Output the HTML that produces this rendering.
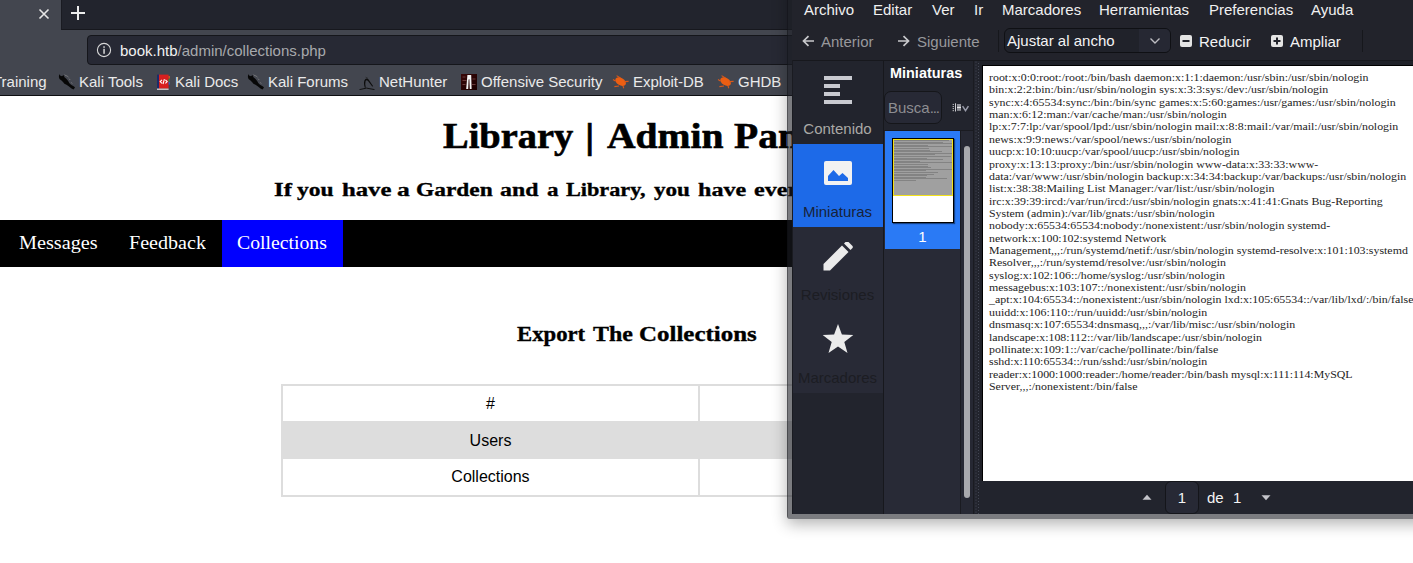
<!DOCTYPE html>
<html><head><meta charset="utf-8">
<style>
*{margin:0;padding:0;box-sizing:border-box}
html,body{width:1413px;height:563px;overflow:hidden;background:#fff;position:relative}
body{font-family:"Liberation Sans",sans-serif}
.a{position:absolute;white-space:pre}
.ui{font-family:"Liberation Sans",sans-serif;font-size:15px;line-height:18px}
.srf{font-family:"Liberation Serif",serif;font-weight:bold;color:#000}
</style></head><body>

<!-- ===== BROWSER CHROME ===== -->
<div class="a" style="left:0;top:0;width:800px;height:96px;background:#43464f"></div>
<!-- tab bar dark area -->
<div class="a" style="left:61px;top:0;width:740px;height:30px;background:#22242d;border-left:1px solid #1a1b22;border-bottom:1px solid #17181e"></div>
<!-- close x -->
<svg class="a" style="left:38px;top:8px" width="12" height="12" viewBox="0 0 12 12"><path d="M1.5 1.5L10.5 10.5M10.5 1.5L1.5 10.5" stroke="#e6e6e6" stroke-width="1.6"/></svg>
<!-- plus -->
<svg class="a" style="left:70px;top:5px" width="16" height="16" viewBox="0 0 16 16"><path d="M8 1V15M1 8H15" stroke="#ececec" stroke-width="2"/></svg>
<!-- address field -->
<div class="a" style="left:87px;top:35px;width:720px;height:30px;background:#272934;border:1px solid #15161b;border-radius:4px"></div>
<svg class="a" style="left:96px;top:42px" width="16" height="16" viewBox="0 0 16 16"><circle cx="8" cy="8" r="6.6" fill="none" stroke="#d8d8d8" stroke-width="1.1"/><rect x="7.3" y="6.8" width="1.5" height="5" fill="#d8d8d8"/><rect x="7.3" y="4.3" width="1.5" height="1.5" fill="#d8d8d8"/></svg>
<div class="a ui" style="left:120px;top:42px;color:#f2f2f2">book.htb<span style="color:#a8a9ad">/admin/collections.php</span></div>

<!-- bookmarks -->
<div class="a ui" style="left:-7px;top:73px;color:#eaeaea">Training</div>
<div class="a ui" style="left:79px;top:73px;color:#eaeaea">Kali Tools</div>
<div class="a ui" style="left:175px;top:73px;color:#eaeaea">Kali Docs</div>
<div class="a ui" style="left:268px;top:73px;color:#eaeaea">Kali Forums</div>
<div class="a ui" style="left:379px;top:73px;color:#eaeaea">NetHunter</div>
<div class="a ui" style="left:481px;top:73px;color:#eaeaea">Offensive Security</div>
<div class="a ui" style="left:633px;top:73px;color:#eaeaea">Exploit-DB</div>
<div class="a ui" style="left:738px;top:73px;color:#eaeaea">GHDB</div>
<!-- bookmark icons -->
<svg class="a" style="left:58px;top:74px" width="18" height="16" viewBox="0 0 18 16"><path d="M1.1 0L2 1.5L4 2.3L5.5 1L6.5 3.2L8 4.6L9.6 6.2L10.6 7.8L11.2 9L13 10.8L16 12.5L17 13.5L15.5 15.4L13.5 14.5L11 12.5L8.5 10.8L6.4 9.8L5 8L3.5 6.5L1.5 5L0.9 3Z" fill="#070707"/><path d="M6.6 0.6L8.4 2.2M8.4 1.2L10.6 3.4M11 4.6L12.2 6M13.4 8.4L14.2 9.6" fill="none" stroke="#8a8a8a" stroke-width="0.7"/></svg>
<svg class="a" style="left:157px;top:74px" width="14" height="16" viewBox="0 0 14 16"><rect x="0" y="0.6" width="2" height="14" fill="#1c2a6a"/><rect x="2" y="0.6" width="9.6" height="14" fill="#d81f1f"/><rect x="0" y="14.6" width="11.6" height="1.2" fill="#e8dede"/><rect x="11.6" y="2" width="1.2" height="2.6" fill="#e0601a"/><rect x="11.6" y="5" width="1.2" height="2.6" fill="#2c9a3a"/><rect x="11.6" y="8" width="1.2" height="2.6" fill="#3a5ad0"/><path d="M5 5.8L3.2 7.6L5 9.4M8.4 5.8L10.2 7.6L8.4 9.4M7.4 5.2L6 10" fill="none" stroke="#fff" stroke-width="1.1"/></svg>
<svg class="a" style="left:247px;top:74px" width="18" height="16" viewBox="0 0 18 16"><path d="M1.1 0L2 1.5L4 2.3L5.5 1L6.5 3.2L8 4.6L9.6 6.2L10.6 7.8L11.2 9L13 10.8L16 12.5L17 13.5L15.5 15.4L13.5 14.5L11 12.5L8.5 10.8L6.4 9.8L5 8L3.5 6.5L1.5 5L0.9 3Z" fill="#070707"/><path d="M6.6 0.6L8.4 2.2M8.4 1.2L10.6 3.4M11 4.6L12.2 6M13.4 8.4L14.2 9.6" fill="none" stroke="#8a8a8a" stroke-width="0.7"/></svg>
<svg class="a" style="left:359px;top:74px" width="16" height="16" viewBox="0 0 16 16"><path d="M5.8 13.8C4.6 10 4.6 6.6 6.4 5Q8 3.8 9.6 5.6L14.2 12.2L13.2 12.6L9.2 7.2Q7.6 5.6 6.6 7Q5.8 9.6 6.8 13.8Z" fill="#0d0d0d"/><path d="M6.6 3.2L9 4.4" stroke="#222" stroke-width="0.7"/><path d="M0.5 15.6Q7 12.6 15.5 15.6" fill="none" stroke="#111" stroke-width="1"/></svg>
<svg class="a" style="left:461px;top:74px" width="16" height="16" viewBox="0 0 16 16"><defs><linearGradient id="og" x1="0" y1="0" x2="1" y2="1"><stop offset="0" stop-color="#3a0808"/><stop offset="1" stop-color="#1a0000"/></linearGradient></defs><rect width="16" height="16" fill="url(#og)"/><g fill="#6a3a3a"><rect x="1.5" y="2.5" width="3" height="1"/><rect x="1.5" y="6" width="4" height="1"/><rect x="1.5" y="10" width="3" height="1"/><rect x="11.5" y="4.5" width="3" height="1"/><rect x="11" y="10" width="3.5" height="1"/></g><path d="M6.4 1H10.2L10.6 15H8.8L8.4 6Q8.2 4.2 7.6 6L7.2 15H5.2Z" fill="#f4f4f4"/></svg>
<svg class="a" style="left:612px;top:75px" width="17" height="14" viewBox="0 0 17 14"><ellipse cx="8.6" cy="6.6" rx="5.8" ry="3.7" transform="rotate(30 8.6 6.6)" fill="#ec5e12"/><path d="M4.6 0.6L8.4 3M1 4.6L3.4 6M12.2 6.6L16.6 6.4M2.4 11.6L7 11M11 11L11.8 13.2" stroke="#d9581a" stroke-width="1.1"/></svg>
<svg class="a" style="left:717px;top:75px" width="17" height="14" viewBox="0 0 17 14"><ellipse cx="8.6" cy="6.6" rx="5.8" ry="3.7" transform="rotate(30 8.6 6.6)" fill="#ec5e12"/><path d="M4.6 0.6L8.4 3M1 4.6L3.4 6M12.2 6.6L16.6 6.4M2.4 11.6L7 11M11 11L11.8 13.2" stroke="#d9581a" stroke-width="1.1"/></svg>
<div class="a" style="left:0;top:95px;width:800px;height:1px;background:#0d0e11"></div>

<!-- ===== PAGE ===== -->
<div class="a" style="left:0;top:220px;width:800px;height:47px;background:#000"></div>
<div class="a" style="left:222px;top:220px;width:121px;height:47px;background:#0000ff"></div>

<!--SERIF-START-->
<div class="a" style="left:442.50px;top:117.81px;font-family:'Liberation Serif',serif;font-weight:700;font-size:35px;line-height:38.74px;color:#000;transform:scaleX(1.0978);transform-origin:0 0;-webkit-text-stroke:0.6px #000">Library</div>
<div class="a" style="left:584.83px;top:117.81px;font-family:'Liberation Serif',serif;font-weight:700;font-size:35px;line-height:38.74px;color:#000;transform:scaleX(1.2190);transform-origin:0 0;-webkit-text-stroke:0.6px #000">|</div>
<div class="a" style="left:606.50px;top:117.81px;font-family:'Liberation Serif',serif;font-weight:700;font-size:35px;line-height:38.74px;color:#000;transform:scaleX(1.1298);transform-origin:0 0;-webkit-text-stroke:0.6px #000">Admin</div>
<div class="a" style="left:734.48px;top:117.81px;font-family:'Liberation Serif',serif;font-weight:700;font-size:35px;line-height:38.74px;color:#000;transform:scaleX(1.1298);transform-origin:0 0;-webkit-text-stroke:0.6px #000">Panel</div>
<div class="a" style="left:273.85px;top:178.56px;font-family:'Liberation Serif',serif;font-weight:700;font-size:19.8px;line-height:21.92px;color:#000;transform:scaleX(1.2513);transform-origin:0 0;-webkit-text-stroke:0.35px #000">If</div>
<div class="a" style="left:297.48px;top:178.56px;font-family:'Liberation Serif',serif;font-weight:700;font-size:19.8px;line-height:21.92px;color:#000;transform:scaleX(1.1887);transform-origin:0 0;-webkit-text-stroke:0.35px #000">you</div>
<div class="a" style="left:341.60px;top:178.56px;font-family:'Liberation Serif',serif;font-weight:700;font-size:19.8px;line-height:21.92px;color:#000;transform:scaleX(1.2503);transform-origin:0 0;-webkit-text-stroke:0.35px #000">have</div>
<div class="a" style="left:397.43px;top:178.56px;font-family:'Liberation Serif',serif;font-weight:700;font-size:19.8px;line-height:21.92px;color:#000;transform:scaleX(1.2889);transform-origin:0 0;-webkit-text-stroke:0.35px #000">a</div>
<div class="a" style="left:416.14px;top:178.56px;font-family:'Liberation Serif',serif;font-weight:700;font-size:19.8px;line-height:21.92px;color:#000;transform:scaleX(1.1820);transform-origin:0 0;-webkit-text-stroke:0.35px #000">Garden</div>
<div class="a" style="left:500.48px;top:178.56px;font-family:'Liberation Serif',serif;font-weight:700;font-size:19.8px;line-height:21.92px;color:#000;transform:scaleX(1.2053);transform-origin:0 0;-webkit-text-stroke:0.35px #000">and</div>
<div class="a" style="left:547.10px;top:178.56px;font-family:'Liberation Serif',serif;font-weight:700;font-size:19.8px;line-height:21.92px;color:#000;transform:scaleX(1.1667);transform-origin:0 0;-webkit-text-stroke:0.35px #000">a</div>
<div class="a" style="left:565.86px;top:178.56px;font-family:'Liberation Serif',serif;font-weight:700;font-size:19.8px;line-height:21.92px;color:#000;transform:scaleX(1.1230);transform-origin:0 0;-webkit-text-stroke:0.35px #000">Library,</div>
<div class="a" style="left:653.78px;top:178.56px;font-family:'Liberation Serif',serif;font-weight:700;font-size:19.8px;line-height:21.92px;color:#000;transform:scaleX(1.1689);transform-origin:0 0;-webkit-text-stroke:0.35px #000">you</div>
<div class="a" style="left:697.91px;top:178.56px;font-family:'Liberation Serif',serif;font-weight:700;font-size:19.8px;line-height:21.92px;color:#000;transform:scaleX(1.2167);transform-origin:0 0;-webkit-text-stroke:0.35px #000">have</div>
<div class="a" style="left:753.97px;top:178.56px;font-family:'Liberation Serif',serif;font-weight:700;font-size:19.8px;line-height:21.92px;color:#000;transform:scaleX(1.2167);transform-origin:0 0;-webkit-text-stroke:0.35px #000">everything</div>
<div class="a" style="left:18.64px;top:233.86px;font-family:'Liberation Serif',serif;font-weight:400;font-size:18px;line-height:19.93px;color:#fff;transform:scaleX(1.1237);transform-origin:0 0;-webkit-text-stroke:0px #fff">Messages</div>
<div class="a" style="left:129.04px;top:233.86px;font-family:'Liberation Serif',serif;font-weight:400;font-size:18px;line-height:19.93px;color:#fff;transform:scaleX(1.1159);transform-origin:0 0;-webkit-text-stroke:0px #fff">Feedback</div>
<div class="a" style="left:237.43px;top:233.86px;font-family:'Liberation Serif',serif;font-weight:400;font-size:18px;line-height:19.93px;color:#fff;transform:scaleX(1.0956);transform-origin:0 0;-webkit-text-stroke:0px #fff">Collections</div>
<div class="a" style="left:517.28px;top:322.84px;font-family:'Liberation Serif',serif;font-weight:700;font-size:21.5px;line-height:23.80px;color:#000;transform:scaleX(1.0571);transform-origin:0 0;-webkit-text-stroke:0.35px #000">Export</div>
<div class="a" style="left:593.07px;top:322.84px;font-family:'Liberation Serif',serif;font-weight:700;font-size:21.5px;line-height:23.80px;color:#000;transform:scaleX(1.1144);transform-origin:0 0;-webkit-text-stroke:0.35px #000">The</div>
<div class="a" style="left:639.14px;top:322.84px;font-family:'Liberation Serif',serif;font-weight:700;font-size:21.5px;line-height:23.80px;color:#000;transform:scaleX(1.1594);transform-origin:0 0;-webkit-text-stroke:0.35px #000">Collections</div>
<!--SERIF-END-->
<!-- table -->
<div class="a" style="left:281px;top:384px;width:600px;height:113px;border:2px solid #dddddd;background:#fff"></div>
<div class="a" style="left:283px;top:421px;width:600px;height:38px;background:#dddddd"></div>
<div class="a" style="left:698px;top:386px;width:2px;height:35px;background:#dddddd"></div>
<div class="a" style="left:698px;top:459px;width:2px;height:36px;background:#dddddd"></div>
<div class="a" style="left:283px;top:395px;width:415px;text-align:center;font-size:16px;color:#000">#</div>
<div class="a" style="left:283px;top:432px;width:415px;text-align:center;font-size:16px;color:#000">Users</div>
<div class="a" style="left:283px;top:468px;width:415px;text-align:center;font-size:16px;color:#000">Collections</div>

<!-- ===== EVINCE WINDOW ===== -->
<div class="a" style="left:787px;top:-30px;width:700px;height:549px;background:rgba(28,29,37,0.58);border-left:1px solid rgba(10,10,14,0.35);box-shadow:0 5px 15px rgba(0,0,0,0.3);border-bottom-left-radius:3px"></div>
<div class="a" style="left:792px;top:0;width:640px;height:514px;background:#22232b"></div>
<!-- menu -->
<div class="a ui" style="left:804px;top:1px;color:#f0f0f0">Archivo</div>
<div class="a ui" style="left:873px;top:1px;color:#f0f0f0">Editar</div>
<div class="a ui" style="left:932px;top:1px;color:#f0f0f0">Ver</div>
<div class="a ui" style="left:974px;top:1px;color:#f0f0f0">Ir</div>
<div class="a ui" style="left:1002px;top:1px;color:#f0f0f0">Marcadores</div>
<div class="a ui" style="left:1099px;top:1px;color:#f0f0f0">Herramientas</div>
<div class="a ui" style="left:1209px;top:1px;color:#f0f0f0">Preferencias</div>
<div class="a ui" style="left:1311px;top:1px;color:#f0f0f0">Ayuda</div>
<!-- toolbar -->
<svg class="a" style="left:802px;top:35px" width="13" height="12" viewBox="0 0 13 12"><path d="M12 6H1.8M6.5 1.2L1.5 6L6.5 10.8" fill="none" stroke="#c9c9cc" stroke-width="1.7"/></svg>
<div class="a ui" style="left:821px;top:33px;color:#98989c">Anterior</div>
<svg class="a" style="left:897px;top:35px" width="13" height="12" viewBox="0 0 13 12"><path d="M1 6H11.2M6.5 1.2L11.5 6L6.5 10.8" fill="none" stroke="#c9c9cc" stroke-width="1.7"/></svg>
<div class="a ui" style="left:917px;top:33px;color:#98989c">Siguiente</div>
<div class="a" style="left:998px;top:30px;width:1px;height:22px;background:#16171c"></div>
<div class="a" style="left:1004px;top:28px;width:167px;height:25px;background:#20222a;border:1px solid #0f1014;border-radius:6px;overflow:hidden"><div class="a" style="left:134px;top:0;width:40px;height:25px;background:#262833"></div></div>
<div class="a ui" style="left:1007px;top:32px;color:#f4f4f4">Ajustar al ancho</div>
<svg class="a" style="left:1149px;top:37px" width="12" height="8" viewBox="0 0 12 8"><path d="M1.5 1.5L6 6L10.5 1.5" fill="none" stroke="#bdbdc2" stroke-width="1.4"/></svg>
<svg class="a" style="left:1180px;top:35px" width="12" height="12" viewBox="0 0 12 12"><rect x="0" y="0" width="12" height="12" rx="2" fill="#e4e4e4"/><rect x="2.5" y="5" width="7" height="2" fill="#22232b"/></svg>
<div class="a ui" style="left:1199px;top:33px;color:#f4f4f4">Reducir</div>
<svg class="a" style="left:1271px;top:35px" width="12" height="12" viewBox="0 0 12 12"><rect x="0" y="0" width="12" height="12" rx="2" fill="#e4e4e4"/><rect x="2.5" y="5" width="7" height="2" fill="#22232b"/><rect x="5" y="2.5" width="2" height="7" fill="#22232b"/></svg>
<div class="a ui" style="left:1290px;top:33px;color:#f4f4f4">Ampliar</div>
<div class="a" style="left:1362px;top:30px;width:1px;height:22px;background:#16171c"></div>

<!-- content area -->
<div class="a" style="left:792px;top:60px;width:640px;height:1px;background:#17181d"></div>
<!-- sidebar buttons -->
<div class="a" style="left:792px;top:61px;width:91px;height:83px;background:#22242d"></div>
<div class="a" style="left:792px;top:144px;width:91px;height:83px;background:#1d6ae8"></div>
<div class="a" style="left:792px;top:227px;width:91px;height:166px;background:#282a36"></div>
<div class="a" style="left:792px;top:393px;width:91px;height:121px;background:#22242d"></div>
<div class="a" style="left:883px;top:60px;width:1px;height:454px;background:#17181d"></div><div class="a" style="left:792px;top:60px;width:1px;height:454px;background:#1a1b21"></div>
<!-- contenido icon -->
<div class="a" style="left:824px;top:76px;width:28px;height:4px;background:#c9cad0"></div>
<div class="a" style="left:824px;top:84px;width:16px;height:4px;background:#c9cad0"></div>
<div class="a" style="left:824px;top:92px;width:16px;height:4px;background:#c9cad0"></div>
<div class="a" style="left:824px;top:100px;width:28px;height:4px;background:#c9cad0"></div>
<div class="a ui" style="left:792px;top:120px;width:91px;text-align:center;color:#aaa9a6">Contenido</div>
<!-- miniaturas icon -->
<svg class="a" style="left:824px;top:161px" width="28" height="24" viewBox="0 0 28 24"><rect x="0" y="0" width="28" height="24" rx="2" fill="#f2f2f2"/><path d="M4 20V15L9.5 9L15 15L18.5 12L24 17V20Z" fill="#1d6ae8"/></svg>
<div class="a ui" style="left:792px;top:203px;width:91px;text-align:center;color:#17233a">Miniaturas</div>
<!-- pencil -->
<svg class="a" style="left:823px;top:242px" width="30" height="29" viewBox="0 0 30 29"><path d="M0.5 28.5V22L19 3.5L25.5 10L7 28.5Z" fill="#ebebeb"/><path d="M21 1.5L23 -0.5Q24 -1.2 25 -0.5L29.5 4Q30.2 5 29.5 6L27.5 8Z" fill="#ebebeb"/></svg>
<div class="a ui" style="left:792px;top:286px;width:91px;text-align:center;color:#1c1d23">Revisiones</div>
<!-- star -->
<svg class="a" style="left:822px;top:323px" width="32" height="32" viewBox="0 0 32 32"><path d="M16 1L19.9 11.6L31.3 11.9L22.3 18.9L25.5 30L16 23.6L6.5 30L9.7 18.9L0.7 11.9L12.1 11.6Z" fill="#ebebeb"/></svg>
<div class="a ui" style="left:792px;top:369px;width:91px;text-align:center;color:#1c1d23">Marcadores</div>

<!-- thumbnails column -->
<div class="a" style="left:884px;top:61px;width:90px;height:70px;background:#22242d"></div><div class="a" style="left:884px;top:131px;width:76px;height:383px;background:#282a36"></div>
<div class="a ui" style="left:890px;top:64px;color:#ffffff;font-weight:bold;transform:scaleX(0.963);transform-origin:0 0">Miniaturas</div>
<div class="a" style="left:884px;top:91px;width:58px;height:33px;background:#272935;border:1px solid #15161a;border-radius:7px"></div>
<div class="a ui" style="left:888px;top:99px;color:#8e8e92">Busca<span style="letter-spacing:-1.2px">...</span></div>
<svg class="a" style="left:952px;top:103px" width="18" height="9" viewBox="0 0 18 9"><g fill="#d0d0d4"><rect x="0.7" y="0.9" width="1.1" height="1.1"/><rect x="0.7" y="3" width="1.1" height="1.1"/><rect x="0.7" y="5" width="1.1" height="1.1"/><rect x="0.7" y="7.1" width="1.1" height="1.1"/><rect x="3" y="0.3" width="1" height="8.2"/><rect x="5" y="1" width="4" height="6.8" fill="#8e8f96"/><rect x="5" y="3.9" width="4" height="1" fill="#f0f0f0"/></g><path d="M10.6 3.2L13.5 7.6L16.4 3.2" fill="none" stroke="#9a9caa" stroke-width="1.5"/></svg>
<div class="a" style="left:884px;top:130px;width:90px;height:1px;background:#1a1b21"></div>
<div class="a" style="left:885px;top:131px;width:75px;height:118px;background:#2a7af5"></div>
<div class="a" style="left:892px;top:138px;width:62px;height:85px;background:#fff;border:1px solid #000;box-shadow:1px 1px 1px rgba(0,0,0,0.45)"></div>
<div class="a" style="left:893px;top:139px;width:60px;height:57px;background:#a0a0a0;border:1px solid #f3e21a"></div>
<div class="a" style="left:894px;top:140px;width:58px;height:55px;overflow:hidden"><div class="a" style="left:0;top:0.0px;width:55.0px;height:1px;background:rgba(50,50,50,0.26)"></div><div class="a" style="left:0;top:1.6px;width:49.2px;height:1px;background:rgba(50,50,50,0.26)"></div><div class="a" style="left:0;top:3.2px;width:58.9px;height:1px;background:rgba(50,50,50,0.26)"></div><div class="a" style="left:0;top:4.8px;width:34.4px;height:1px;background:rgba(50,50,50,0.26)"></div><div class="a" style="left:0;top:6.4px;width:59.3px;height:1px;background:rgba(50,50,50,0.26)"></div><div class="a" style="left:0;top:8.0px;width:35.1px;height:1px;background:rgba(50,50,50,0.26)"></div><div class="a" style="left:0;top:9.6px;width:36.2px;height:1px;background:rgba(50,50,50,0.26)"></div><div class="a" style="left:0;top:11.2px;width:47.7px;height:1px;background:rgba(50,50,50,0.26)"></div><div class="a" style="left:0;top:12.8px;width:60.5px;height:1px;background:rgba(50,50,50,0.26)"></div><div class="a" style="left:0;top:14.4px;width:41.3px;height:1px;background:rgba(50,50,50,0.26)"></div><div class="a" style="left:0;top:16.0px;width:57.1px;height:1px;background:rgba(50,50,50,0.26)"></div><div class="a" style="left:0;top:17.6px;width:32.6px;height:1px;background:rgba(50,50,50,0.26)"></div><div class="a" style="left:0;top:19.2px;width:49.4px;height:1px;background:rgba(50,50,50,0.26)"></div><div class="a" style="left:0;top:20.8px;width:25.7px;height:1px;background:rgba(50,50,50,0.26)"></div><div class="a" style="left:0;top:22.4px;width:60.8px;height:1px;background:rgba(50,50,50,0.26)"></div><div class="a" style="left:0;top:24.0px;width:34.4px;height:1px;background:rgba(50,50,50,0.26)"></div><div class="a" style="left:0;top:25.6px;width:34.2px;height:1px;background:rgba(50,50,50,0.26)"></div><div class="a" style="left:0;top:27.2px;width:37.3px;height:1px;background:rgba(50,50,50,0.26)"></div><div class="a" style="left:0;top:28.8px;width:61.5px;height:1px;background:rgba(50,50,50,0.26)"></div><div class="a" style="left:0;top:30.4px;width:31.6px;height:1px;background:rgba(50,50,50,0.26)"></div><div class="a" style="left:0;top:32.0px;width:44.4px;height:1px;background:rgba(50,50,50,0.26)"></div><div class="a" style="left:0;top:33.6px;width:39.6px;height:1px;background:rgba(50,50,50,0.26)"></div><div class="a" style="left:0;top:35.2px;width:33.2px;height:1px;background:rgba(50,50,50,0.26)"></div><div class="a" style="left:0;top:36.8px;width:31.6px;height:1px;background:rgba(50,50,50,0.26)"></div><div class="a" style="left:0;top:38.4px;width:52.6px;height:1px;background:rgba(50,50,50,0.26)"></div><div class="a" style="left:0;top:40.0px;width:21.5px;height:1px;background:rgba(50,50,50,0.26)"></div></div>
<div class="a ui" style="left:885px;top:228px;width:75px;text-align:center;color:#fff">1</div>
<!-- scrollbar -->
<div class="a" style="left:960px;top:131px;width:1px;height:383px;background:#1a1b21"></div>
<div class="a" style="left:961px;top:131px;width:12px;height:383px;background:#262833"></div>
<div class="a" style="left:964px;top:146px;width:6px;height:352px;background:#a8a9ad;border-radius:3px"></div>
<div class="a" style="left:973px;top:61px;width:1px;height:453px;background:#1a1b21"></div>
<!-- dotted separator -->
<svg class="a" style="left:974px;top:61px" width="6" height="453"><defs><pattern id="dp" width="6" height="3" patternUnits="userSpaceOnUse"><rect x="1.5" y="0.6" width="1" height="1" fill="#464957"/><rect x="4" y="2.1" width="1" height="1" fill="#464957"/></pattern></defs><rect width="6" height="453" fill="#22242d"/><rect width="6" height="453" fill="url(#dp)"/></svg>
<div class="a" style="left:980px;top:61px;width:460px;height:420px;background:#1f2128"></div>
<!-- page -->
<div class="a" style="left:982px;top:65px;width:460px;height:416px;background:#fff;border-left:1px solid #000;border-top:1px solid #000"></div>
<div id="pdf" class="a" style="left:989px;top:72px;font-family:'Liberation Serif',serif;font-size:9.6px;line-height:12.36px;color:#1c1c1c;transform:scaleX(1.2396);transform-origin:0 0">root:x:0:0:root:/root:/bin/bash daemon:x:1:1:daemon:/usr/sbin:/usr/sbin/nologin
bin:x:2:2:bin:/bin:/usr/sbin/nologin sys:x:3:3:sys:/dev:/usr/sbin/nologin
sync:x:4:65534:sync:/bin:/bin/sync games:x:5:60:games:/usr/games:/usr/sbin/nologin
man:x:6:12:man:/var/cache/man:/usr/sbin/nologin
lp:x:7:7:lp:/var/spool/lpd:/usr/sbin/nologin mail:x:8:8:mail:/var/mail:/usr/sbin/nologin
news:x:9:9:news:/var/spool/news:/usr/sbin/nologin
uucp:x:10:10:uucp:/var/spool/uucp:/usr/sbin/nologin
proxy:x:13:13:proxy:/bin:/usr/sbin/nologin www-data:x:33:33:www-
data:/var/www:/usr/sbin/nologin backup:x:34:34:backup:/var/backups:/usr/sbin/nologin
list:x:38:38:Mailing List Manager:/var/list:/usr/sbin/nologin
irc:x:39:39:ircd:/var/run/ircd:/usr/sbin/nologin gnats:x:41:41:Gnats Bug-Reporting
System (admin):/var/lib/gnats:/usr/sbin/nologin
nobody:x:65534:65534:nobody:/nonexistent:/usr/sbin/nologin systemd-
network:x:100:102:systemd Network
Management,,,:/run/systemd/netif:/usr/sbin/nologin systemd-resolve:x:101:103:systemd
Resolver,,,:/run/systemd/resolve:/usr/sbin/nologin
syslog:x:102:106::/home/syslog:/usr/sbin/nologin
messagebus:x:103:107::/nonexistent:/usr/sbin/nologin
_apt:x:104:65534::/nonexistent:/usr/sbin/nologin lxd:x:105:65534::/var/lib/lxd/:/bin/false
uuidd:x:106:110::/run/uuidd:/usr/sbin/nologin
dnsmasq:x:107:65534:dnsmasq,,,:/var/lib/misc:/usr/sbin/nologin
landscape:x:108:112::/var/lib/landscape:/usr/sbin/nologin
pollinate:x:109:1::/var/cache/pollinate:/bin/false
sshd:x:110:65534::/run/sshd:/usr/sbin/nologin
reader:x:1000:1000:reader:/home/reader:/bin/bash mysql:x:111:114:MySQL
Server,,,:/nonexistent:/bin/false</div>
<!-- bottom bar -->
<div class="a" style="left:980px;top:481px;width:460px;height:33px;background:#22242d"></div>
<svg class="a" style="left:1142px;top:494px" width="10" height="6" viewBox="0 0 10 6"><path d="M0.5 5.8L5 0.8L9.5 5.8Z" fill="#c4c4ca"/></svg>
<div class="a" style="left:1165px;top:481px;width:34px;height:33px;background:#272935;border:1px solid #14151a;border-radius:6px"></div>
<div class="a ui" style="left:1165px;top:489px;width:34px;text-align:center;color:#f4f4f4">1</div>
<div class="a ui" style="left:1207px;top:489px;color:#f4f4f4">de</div>
<div class="a ui" style="left:1233px;top:489px;color:#f4f4f4">1</div>
<svg class="a" style="left:1261px;top:495px" width="10" height="6" viewBox="0 0 10 6"><path d="M0.5 0.2L5 5.2L9.5 0.2Z" fill="#c4c4ca"/></svg>

</body></html>
